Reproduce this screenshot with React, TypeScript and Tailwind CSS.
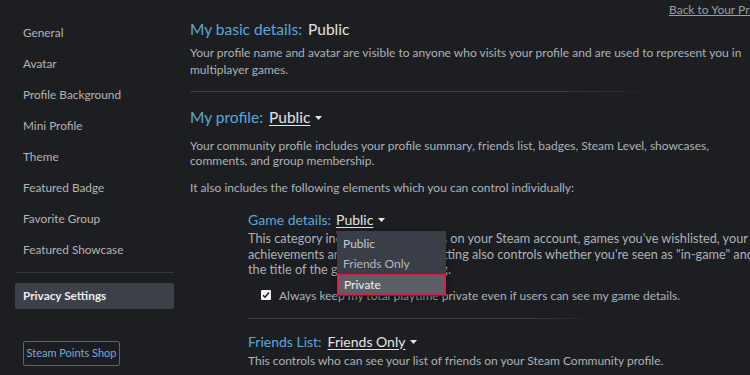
import React from 'react';

const navItems = [
  'General',
  'Avatar',
  'Profile Background',
  'Mini Profile',
  'Theme',
  'Featured Badge',
  'Favorite Group',
  'Featured Showcase',
];

const Caret = () => (
  <svg width="7" height="4" viewBox="0 0 7 4" className="inline-block ml-[5px] mb-[2px]">
    <path d="M0 0h7L3.5 4z" fill="#e6e6e6" />
  </svg>
);

const Divider = ({ className = '' }: { className?: string }) => (
  <div className={`h-px bg-[linear-gradient(to_right,#3a3c42_80%,transparent)] ${className}`} />
);

export default function App() {
  return (
    <div className="w-[750px] h-[375px] overflow-hidden bg-[#1d1e22] flex font-['Lato',sans-serif] text-[#acb2b8]">
      {/* Sidebar */}
      <aside className="w-[190px] shrink-0 pl-[15px] pr-[16px] pt-[17px]">
        {navItems.map((item) => (
          <div key={item} className="h-[31px] flex items-center pl-[8px] text-[11.8px] text-[#b5b4b2]">
            {item}
          </div>
        ))}
        <div className="mt-[7px] h-px bg-[#34363b]" />
        <div className="mt-[10px] h-[26px] flex items-center pl-[8px] bg-[#3c4049] rounded-[2px] text-[11.8px] font-bold text-[#eeeeee]">
          Privacy Settings
        </div>
        <button className="mt-[32px] ml-[8px] w-[97px] h-[25px] border border-[#4e6782] rounded-[2px] bg-[#1b1d22] text-[11px] text-[#79a8d6]">
          Steam Points Shop
        </button>
      </aside>

      {/* Main */}
      <main className="w-[640px] shrink-0 text-[12px]">
        <div className="flex justify-end pr-[58px] pt-[2px] leading-[16px]">
          <a className="underline text-[#9a9ea3] whitespace-nowrap">Back to Your Profile</a>
        </div>

        <h2 className="mt-[1px] text-[15.5px] leading-[20px] text-[#5aa8d6]">
          My basic details:<span className="ml-[6px] text-[#e4e4e4]">Public</span>
        </h2>
        <p className="mt-[5px] w-[560px] leading-[17px]">
          Your profile name and avatar are visible to anyone who visits your profile and are used to represent you in multiplayer games.
        </p>

        <Divider className="mt-[13px] w-[467px]" />

        <h2 className="mt-[15px] text-[15.5px] leading-[20px] text-[#5aa8d6]">
          My profile:<span className="ml-[6px] text-[#e4e4e4] underline underline-offset-2">Public</span>
          <Caret />
        </h2>
        <p className="mt-[11px] w-[560px] leading-[15px]">
          Your community profile includes your profile summary, friends list, badges, Steam Level, showcases, comments, and group membership.
        </p>
        <p className="mt-[12px] leading-[15px]">It also includes the following elements which you can control individually:</p>

        {/* Game details */}
        <div className="ml-[58px] mt-[15px]">
          <div className="text-[14px] leading-[20px] text-[#5aa8d6]">
            Game details:
            <span className="relative ml-[5px] inline-block text-[#e4e4e4]">
              <span className="underline underline-offset-2">Public</span>
              <Caret />
              <span className="absolute left-0 right-[-2px] bottom-[-3px] h-[2px] bg-[#d3214b]" />
              {/* Dropdown */}
              <div className="absolute left-[1px] top-[21px] w-[109px] bg-[#3a3e46] pt-[3px] pb-[1px] shadow-[0_2px_6px_rgba(0,0,0,0.5)] z-10 text-[12px] leading-[20px]">
                <div className="pl-[6px] text-[#c8cbcf]">Public</div>
                <div className="pl-[6px] text-[#b6b9bd]">Friends Only</div>
                <div className="pl-[5px] h-[21px] border-2 border-[#d3214b] bg-[#5b5f68] text-[#f0f0f0] leading-[17px]">Private</div>
              </div>
            </span>
          </div>
          <p className="mt-[1px] w-[510px] text-[12.7px] leading-[15.5px]">
            This category includes all the games on your Steam account, games you've wishlisted, your achievements and playtime. This setting also controls whether you're seen as "in-game" and the title of the game you are playing.
          </p>
          <label className="mt-[10px] ml-[13px] flex items-center gap-[8px] leading-[15px] whitespace-nowrap">
            <span className="w-[10px] h-[10px] bg-[#f2f2f2] rounded-[1px] flex items-center justify-center">
              <svg width="8" height="8" viewBox="0 0 8 8">
                <path d="M1 4.2l2 2L7 1.6" stroke="#222" strokeWidth="1.6" fill="none" />
              </svg>
            </span>
            Always keep my total playtime private even if users can see my game details.
          </label>

          <Divider className="mt-[15px] w-[352px]" />

          <div className="mt-[13px] text-[14px] leading-[20px] text-[#5aa8d6]">
            Friends List:
            <span className="ml-[6px] text-[#e4e4e4] underline underline-offset-2">Friends Only</span>
            <Caret />
          </div>
          <p className="mt-[1px] leading-[16px] whitespace-nowrap">
            This controls who can see your list of friends on your Steam Community profile.
          </p>
        </div>
      </main>
    </div>
  );
}
